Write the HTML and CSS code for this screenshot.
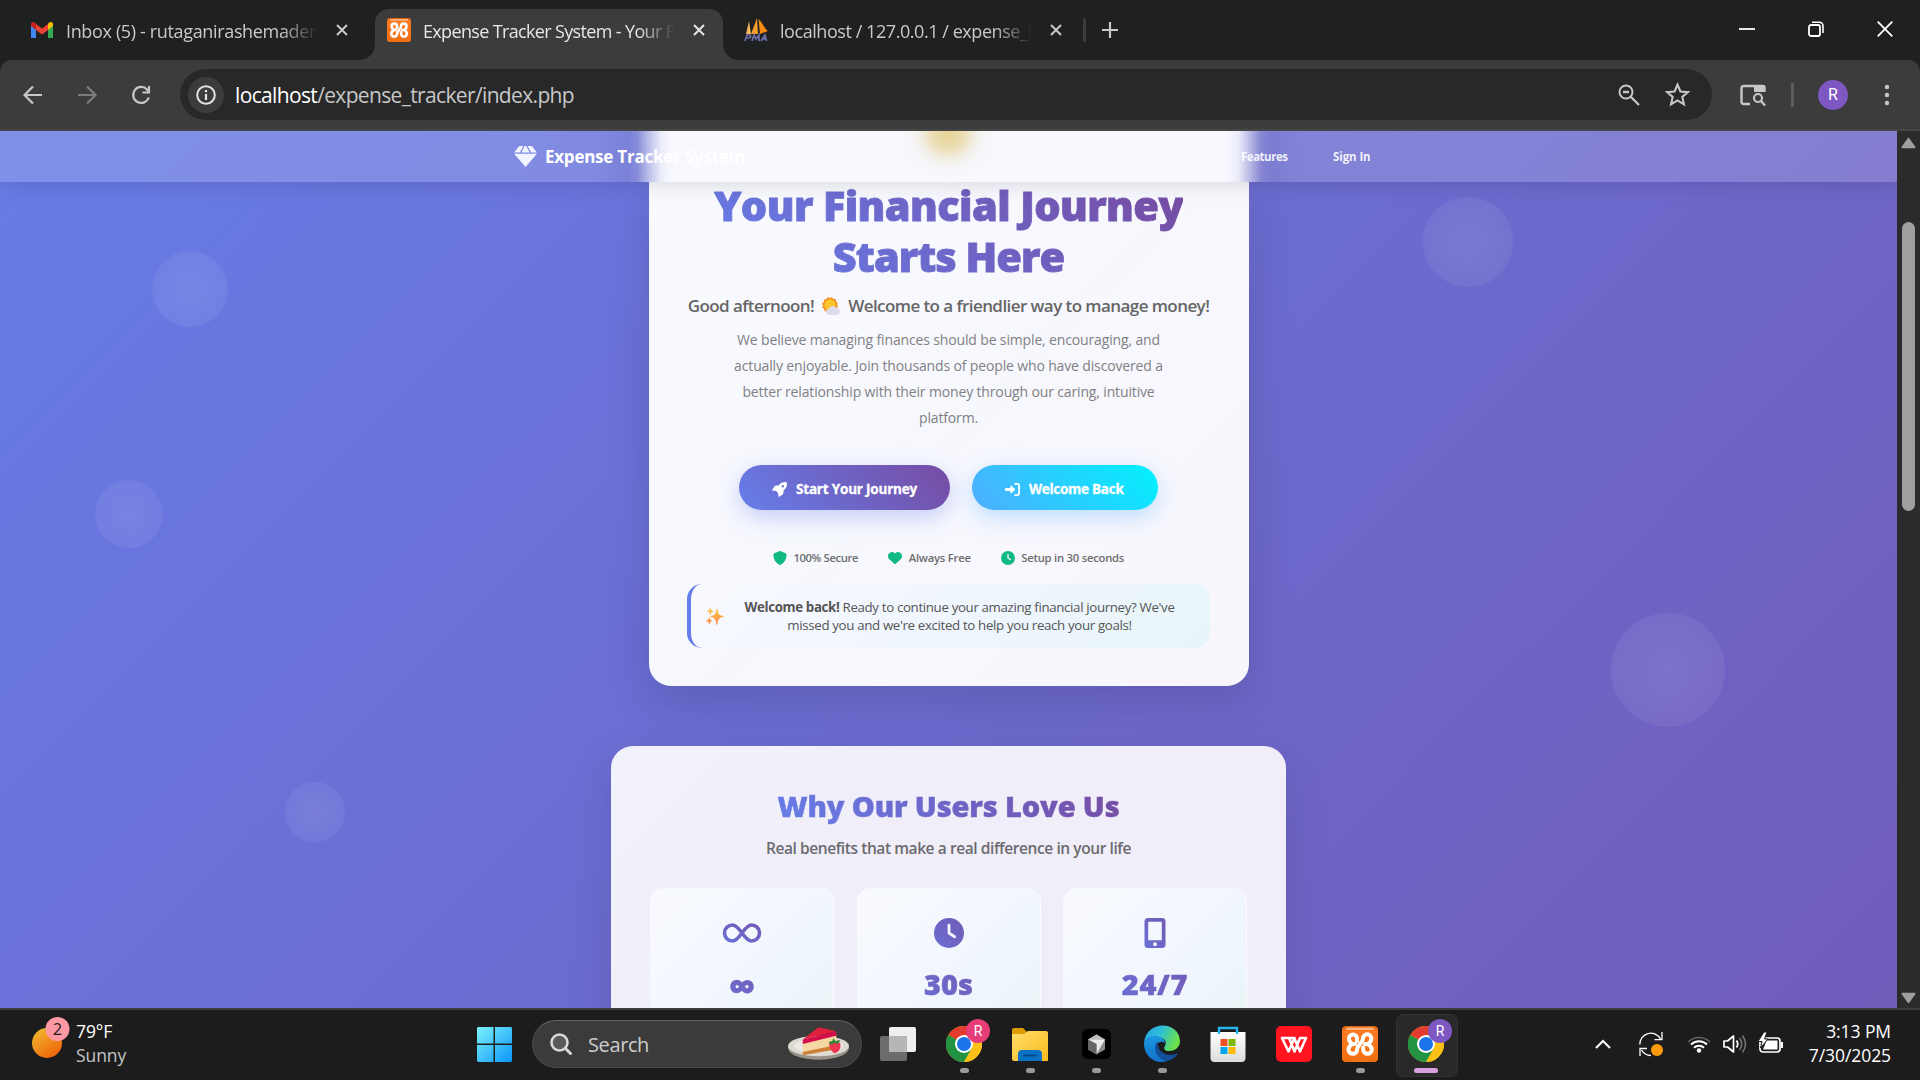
FILE: index.html
```html
<!DOCTYPE html>
<html lang="en">
<head>
<meta charset="utf-8">
<title>Expense Tracker System</title>
<link rel="stylesheet" href="styles.css">
</head>
<body>
<svg width="0" height="0" class="defs" aria-hidden="true">
  <defs>
    <linearGradient id="brand" x1="0" y1="1" x2="1" y2="0"><stop offset="0" stop-color="#6970d4"/><stop offset="1" stop-color="#735ab5"/></linearGradient>
    <linearGradient id="sunG" x1="0" y1="0" x2=".7" y2="1"><stop offset="0" stop-color="#f0c030"/><stop offset="1" stop-color="#f0640c"/></linearGradient>
    <linearGradient id="winG" x1="0" y1="0" x2="1" y2="1"><stop offset="0" stop-color="#7cf3fb"/><stop offset="1" stop-color="#0a94f8"/></linearGradient>
    <linearGradient id="orangeG" x1="0" y1="0" x2="0" y2="1"><stop offset="0" stop-color="#d8600a"/><stop offset=".15" stop-color="#fb7a24"/><stop offset="1" stop-color="#f0700f"/></linearGradient>
    <linearGradient id="folderG" x1="0" y1="0" x2="1" y2="1"><stop offset="0" stop-color="#ffdc6c"/><stop offset="1" stop-color="#fbbc1c"/></linearGradient>
    <linearGradient id="edgeA" x1="0" y1="0" x2="1" y2=".3"><stop offset="0" stop-color="#2b9fe8"/><stop offset=".5" stop-color="#2cc0d8"/><stop offset="1" stop-color="#6ae04c"/></linearGradient>
    <linearGradient id="edgeB" x1="0" y1="0" x2="0" y2="1"><stop offset="0" stop-color="#1c96e0"/><stop offset="1" stop-color="#1273cc"/></linearGradient>
    <linearGradient id="storeG" x1="0" y1="0" x2="0" y2="1"><stop offset="0" stop-color="#ffffff"/><stop offset="1" stop-color="#dcdcdc"/></linearGradient>
    <linearGradient id="spark" x1="0" y1="0" x2="0" y2="1"><stop offset="0" stop-color="#ffc44a"/><stop offset="1" stop-color="#ff8a4c"/></linearGradient>
    <symbol id="xampp" viewBox="0 0 36 36">
      <rect width="36" height="36" rx="4" fill="url(#orangeG)"/>
      <rect x="4" y="1.500" width="28" height="2.500" rx="1.200" fill="#ffb27c"/>
      <path d="M15 15V12.500a4 4 0 0 0-8 0C7 15 8 16.500 10.500 18 8 19.500 6.500 21 6.500 23.500a4.300 4.300 0 0 0 8.600 0C15.100 19.500 21 16.500 21 12.500a4 4 0 0 1 8.300 0C29.300 15 28 16.800 25.500 18 28 19.200 29.800 21 29.800 23.500a4.300 4.300 0 0 1-8.600 0V21.500M10.500 18H13M25.500 18H23" fill="none" stroke="#fff" stroke-width="4" stroke-linecap="round" stroke-linejoin="round"/>
    </symbol>
    <symbol id="chrome" viewBox="0 0 36 36">
      <circle cx="18" cy="18" r="18" fill="#fbc116"/>
      <path d="M18 18 2.400 9A18 18 0 0 1 33.600 9H18z" fill="#e33b2e"/>
      <path d="M2.400 9A18 18 0 0 0 18 36l7.800-13.500L18 18z" fill="#229342"/>
      <path d="M18 9h15.600A18 18 0 0 1 18 36l7.800-13.500z" fill="#fbc116"/>
      <circle cx="18" cy="18" r="9" fill="#fff"/><circle cx="18" cy="18" r="7" fill="#1a73e8"/>
    </symbol>
    <symbol id="clock" viewBox="0 0 512 512"><path d="M256 0a256 256 0 1 1 0 512A256 256 0 1 1 256 0zM232 120V256c0 8 4 15.500 10.700 20l96 64c11 7.400 25.900 4.400 33.300-6.700s4.400-25.900-6.700-33.300L280 243.200V120c0-13.300-10.700-24-24-24s-24 10.700-24 24z"/></symbol>
    <symbol id="x" viewBox="0 0 12 12"><path d="M1 1l10 10M11 1L1 11" fill="none" stroke="currentColor" stroke-width="2"/></symbol>
  </defs>
</svg>

<div class="screen">
  <header class="tabs">
    <div class="tab tab-first">
      <svg class="gmail" viewBox="0 0 22 16"><path d="M0 2v14h5V6z" fill="#4285f4"/><path d="M22 2v14h-5V6z" fill="#34a853"/><path d="M17 2v6l5-4V2.200C22 0 19.500-.8 17.800.8z" fill="#fbbc04"/><path d="M5 8V2l6 4.500L17 2v6l-6 4.600z" fill="#ea4335"/><path d="M0 2.200V4l5 4V2L4.200.8C2.500-.8 0 0 0 2.200z" fill="#c5221f"/></svg>
      <span class="tab-title t1">Inbox (5) - rutaganirashemadern</span>
      <svg class="x"><use href="#x"/></svg>
    </div>
    <div class="tab tab-active">
      <svg class="fav"><use href="#xampp"/></svg>
      <span class="tab-title t2">Expense Tracker System - Your F</span>
      <svg class="x"><use href="#x"/></svg>
    </div>
    <div class="tab tab-last">
      <svg class="fav" viewBox="0 0 24 24"><path d="M5 3L2 16h5z" fill="#f9b55a"/><path d="M13 0L7 16h7z" fill="#f89c2a"/><path d="M14.500 1c5 5 6 10 9.500 12l-8 3z" fill="#f58a10"/><path d="M1 23l2-6h3q2 2-1 3H2M8 23l2-6 2 4 3-4v6M17 23l4-6 1.500 6M18 21h4" fill="none" stroke="#6a6fa8" stroke-width="1.700"/></svg>
      <span class="tab-title t3">localhost / 127.0.0.1 / expense_t</span>
      <svg class="x"><use href="#x"/></svg>
    </div>
    <i class="tab-sep"></i>
    <svg class="plus" viewBox="0 0 16 16"><path d="M8 0v16M0 8h16" stroke="#c8c8c8" stroke-width="2.200"/></svg>
    <div class="win">
      <svg viewBox="0 0 16 16"><path d="M0 8h16" stroke="#fff" stroke-width="1.800"/></svg>
      <svg viewBox="0 0 16 16"><rect x="1" y="4" width="11" height="11" rx="2" fill="none" stroke="#fff" stroke-width="1.800"/><path d="M4 1.200h7.500a3.500 3.500 0 0 1 3.500 3.500V12" fill="none" stroke="#fff" stroke-width="1.600"/></svg>
      <svg viewBox="0 0 16 16"><path d="M.7.700l14.600 14.600M15.300.7L.7 15.300" stroke="#fff" stroke-width="1.800"/></svg>
    </div>
  </header>

  <div class="toolbar">
    <svg class="nav-i" viewBox="0 0 20 20"><path d="M19 10H2M10 1.500L1.500 10l8.500 8.500" fill="none" stroke="#c7c7c7" stroke-width="2.200"/></svg>
    <svg class="nav-i" viewBox="0 0 20 20"><path d="M1 10h17M10 1.500l8.500 8.500-8.500 8.500" fill="none" stroke="#7c7c7c" stroke-width="2.200"/></svg>
    <svg class="nav-i" viewBox="0 0 20 20"><path d="M17.800 12.500A8 8 0 1 1 16 4.400l1.500 2M18 1v6.500h-6.500" fill="none" stroke="#c7c7c7" stroke-width="2.200"/></svg>
    <div class="omnibox">
      <span class="info"><svg viewBox="0 0 20 20"><circle cx="10" cy="10" r="8.800" fill="none" stroke="#e3e3e3" stroke-width="2"/><path d="M10 9v6M10 5v2.200" stroke="#e3e3e3" stroke-width="2.200"/></svg></span>
      <span class="url"><b>localhost</b>/expense_tracker/index.php</span>
      <svg class="mag" viewBox="0 0 22 22"><circle cx="8" cy="8" r="6.500" fill="none" stroke="#c7c7c7" stroke-width="2"/><path d="M12.500 12.500l8.500 8.500M5 8h6" stroke="#c7c7c7" stroke-width="2.300"/></svg>
      <svg class="star" viewBox="0 0 24 24"><path d="M12 2.500l2.800 6.600 7.200.6-5.400 4.700 1.600 7L12 17.700 5.800 21.400l1.600-7L2 9.700l7.200-.6z" fill="none" stroke="#c7c7c7" stroke-width="2"/></svg>
    </div>
    <svg class="lens" viewBox="0 0 26 22"><path d="M10 20H3.500A2 2 0 0 1 1.500 18V4A2 2 0 0 1 3.500 2H22.500A2 2 0 0 1 24.500 4V8" fill="none" stroke="#c7c7c7" stroke-width="2.400"/><path d="M14 1h11v7H14z" fill="#c7c7c7"/><circle cx="18" cy="14" r="4" fill="none" stroke="#c7c7c7" stroke-width="2.200"/><path d="M21 17l4 4.500" stroke="#c7c7c7" stroke-width="2.400"/></svg>
    <i class="bar-sep"></i>
    <span class="avatar">R</span>
    <svg class="dots" viewBox="0 0 6 22"><circle cx="3" cy="3" r="2.200" fill="#c7c7c7"/><circle cx="3" cy="11" r="2.200" fill="#c7c7c7"/><circle cx="3" cy="19" r="2.200" fill="#c7c7c7"/></svg>
  </div>

  <div class="view">
    <main class="page">
      <i class="bubble b1"></i><i class="bubble b2"></i><i class="bubble b3"></i><i class="bubble b4"></i><i class="bubble b5"></i>
      <nav class="site-nav">
        <svg class="gem" viewBox="0 0 24 22"><path d="M5.500 0h4.300L6 6.800H0zM18.500 0h-4.300L18 6.800h6zM11.200 0h1.600l3.600 6.800H7.600zM0 8.200h24L12 22z"/></svg>
        <b class="brand">Expense Tracker System</b>
        <span class="links">Features</span><span class="links sign">Sign In</span>
      </nav>
      <section class="hero">
        <h1>Your Financial Journey<br><span>Starts Here</span></h1>
        <p class="greet"><span>Good afternoon!</span> <svg class="emoji" viewBox="0 0 18 18"><circle cx="8" cy="7.500" r="7" fill="#f58a1c" stroke="#f58a1c" stroke-width="1.600" stroke-dasharray="2.200 1.500"/><circle cx="8" cy="7.500" r="5.700" fill="#fcc52c"/><path d="M7.500 17.500a3.200 3.200 0 0 1-.3-6.400 3.800 3.800 0 0 1 7-.6 3.500 3.500 0 0 1 .3 7z" fill="#dcdcea"/></svg> <span>Welcome to a friendlier way to manage money!</span></p>
        <p class="lead">We believe managing finances should be simple, encouraging, and<br>actually enjoyable. Join thousands of people who have discovered a<br>better relationship with their money through our caring, intuitive<br>platform.</p>
        <div class="cta">
          <a class="btn primary"><svg viewBox="0 0 512 512"><path d="M156 320c-8-2-15-5-21-11L20 290c-14-2-20-18-11-29l80-115c12-17 31-27 52-27h84C310 5 420-8 488 8c8 2 14 8 16 16 16 68 3 178-111 263v84c0 21-10 40-27 52L251 503c-12 8-28 0-29-14l-19-115zM368 184a40 40 0 1 0 0-80 40 40 0 0 0 0 80z" fill="#fff"/></svg>Start Your Journey</a>
          <a class="btn second"><svg viewBox="0 0 512 512"><path d="M218 385l120-112c10-9 10-25 0-34L218 127c-13-12-34-3-34 15v66H32c-18 0-32 14-32 32v32c0 18 14 32 32 32h152v66c0 18 21 27 34 15z" fill="#fff"/><path d="M344 64h72a64 64 0 0 1 64 64v256a64 64 0 0 1-64 64h-72" fill="none" stroke="#fff" stroke-width="62" stroke-linecap="round"/></svg>Welcome Back</a>
        </div>
        <ul class="perks">
          <li><svg viewBox="0 0 512 512"><path d="M256 0c5 0 9 1 13 3l188 80c22 9 39 31 38 57 0 99-41 280-213 363-17 8-36 8-52 0C57 420 16 239 16 140c-1-26 16-48 38-57L243 3c4-2 8-3 13-3z"/></svg>100% Secure</li>
          <li><svg viewBox="0 0 512 512"><path d="M47 300l181 169c15 14 41 14 56 0l181-169c30-29 47-68 47-110v-6c0-70-51-130-120-141-46-8-92 7-125 40l-11 11-12-11C211 50 165 35 119 43 51 54 0 114 0 184v6c0 42 17 81 47 110z"/></svg>Always Free</li>
          <li><svg><use href="#clock"/></svg>Setup in 30 seconds</li>
        </ul>
        <div class="note">
          <svg class="sparkles" viewBox="0 0 18 18"><path d="M11 1c.8 5 2 7 7 8-5 1-6.200 3-7 8.500C10.200 12 9 10 4.500 9 9 8 10.200 6 11 1zM4 0c.3 2 1 3 3 3.500C5 4 4.300 5 4 7 3.700 5 3 4 1 3.500 3 3 3.700 2 4 0zM3 10c.3 2 1 3 3 3.500-2 .5-2.700 1.500-3 3.500-.3-2-1-3-3-3.500 2-.5 2.700-1.500 3-3.500z" fill="url(#spark)" stroke="url(#spark)" stroke-width=".8"/></svg>
          <p><b>Welcome back!</b> Ready to continue your amazing financial journey? We've<br>missed you and we're excited to help you reach your goals!</p>
        </div>
      </section>
      <section class="why">
        <h2>Why Our Users Love Us</h2>
        <p class="why-sub">Real benefits that make a real difference in your life</p>
        <div class="stats">
          <div class="stat"><svg viewBox="0 0 38 30"><path d="M19 15C14 8 12 7 9.500 7a8 8 0 0 0 0 16C12 23 14 22 19 15S26 7 28.500 7a8 8 0 0 1 0 16C26 23 24 22 19 15z" fill="none" stroke="url(#brand)" stroke-width="3.600"/></svg><strong class="inf">∞</strong></div>
          <div class="stat"><svg viewBox="0 0 30 30" fill="url(#brand)"><use href="#clock"/></svg><strong>30s</strong></div>
          <div class="stat"><svg viewBox="0 0 30 30"><path fill-rule="evenodd" d="M8 0h14a3.500 3.500 0 0 1 3.500 3.500v23A3.500 3.500 0 0 1 22 30H8a3.500 3.500 0 0 1-3.500-3.500v-23A3.500 3.500 0 0 1 8 0zM8.200 3.700v18.500h13.600V3.700zM15 24.200a2 2 0 1 0 0 4 2 2 0 0 0 0-4z" fill="url(#brand)"/></svg><strong class="always">24/7</strong></div>
        </div>
      </section>
    </main>
    <aside class="scroll">
      <svg viewBox="0 0 16 12"><path d="M8 1.500L14.500 10.500H1.500z" fill="#9f9f9f" stroke="#9f9f9f" stroke-width="2" stroke-linejoin="round"/></svg>
      <i class="thumb"></i>
      <svg viewBox="0 0 16 12"><path d="M8 10.500L14.500 1.500H1.500z" fill="#9f9f9f" stroke="#9f9f9f" stroke-width="2" stroke-linejoin="round"/></svg>
    </aside>
  </div>

  <footer class="taskbar">
    <div class="weather">
      <span class="sun"><svg viewBox="0 0 38 42"><circle cx="15" cy="26" r="15" fill="url(#sunG)"/><circle cx="25.500" cy="12" r="12" fill="#ff98a2"/></svg><em>2</em></span>
      <p>79°F<br><span class="dim">Sunny</span></p>
    </div>
    <svg class="start" viewBox="0 0 36 36"><path d="M0 1.500A1.500 1.500 0 0 1 1.500 0H17v17H0zM18.500 0H34.500A1.500 1.500 0 0 1 36 1.500V17H18.500zM0 18.500h17V36H1.500A1.500 1.500 0 0 1 0 34.500zM18.500 18.500H36V34.500A1.500 1.500 0 0 1 34.500 36H18.500z" fill="url(#winG)"/></svg>
    <div class="search">
      <svg class="s-mag" viewBox="0 0 22 22"><circle cx="9.500" cy="9.500" r="8" fill="#5a5a5a" stroke="#d8d8dc" stroke-width="2.600"/><path d="M15.500 15.500l5 5" stroke="#d8d8dc" stroke-width="3" stroke-linecap="round"/></svg>
      <span>Search</span>
      <svg class="cake" viewBox="0 0 64 36"><ellipse cx="32" cy="22" rx="31" ry="12" fill="#98948c"/><ellipse cx="32" cy="20" rx="31" ry="10.500" fill="#dedad2"/><ellipse cx="32" cy="20" rx="25" ry="7" fill="#ece9e3"/><path d="M16 17l34-9v15L16 29z" fill="#f6d9a2"/><path d="M16 26l34-7v4.500L16 29.500z" fill="#cd8138"/><path d="M16 13.500L32 1l18 4z" fill="#e0203c"/><path d="M16 13.500L50 5v4.500L16 18z" fill="#d40f4c"/><path d="M43 17q5-4 11 0 2 7-5 10.500-7-3-6-10.500z" fill="#f23350"/><path d="M42 16l4-1 1-3 2 3 5-1-2 4-4-1-3 2z" fill="#34843a"/></svg>
    </div>
    <div class="apps">
      <span class="app"><svg viewBox="0 0 36 36"><rect x="9" y="1" width="27" height="25" rx="2" fill="#efefef"/><rect y="10" width="27" height="25" rx="2" fill="#777" opacity=".88"/><path d="M9 10h18v16H9z" fill="#b6b6b6"/></svg></span>
      <span class="app run"><svg><use href="#chrome"/></svg><em class="pink">R</em></span>
      <span class="app run"><svg viewBox="0 0 36 36"><path d="M0 4a2 2 0 0 1 2-2h9l4 4-3 4H0z" fill="#dd9b04"/><path d="M0 8h12l4-3h18a2 2 0 0 1 2 2v28H2a2 2 0 0 1-2-2z" fill="url(#folderG)"/><path d="M6 35v-7a4 4 0 0 1 4-4h16a4 4 0 0 1 4 4v7z" fill="#0a72c4"/><path d="M11 29.500h14" stroke="#0a4a88" stroke-width="2"/></svg></span>
      <span class="app run"><svg viewBox="0 0 36 36"><rect x="4" y="3" width="29" height="30" rx="6" fill="#000"/><path d="M18.500 8.500l8.500 5v10l-8.500 5-8.500-5v-10z" fill="#8c8c8c"/><path d="M10 13.500l8.500-5 8.500 5z" fill="#bcbcbc"/><path d="M10 13.500h17L18.500 28V18z" fill="#ececec"/><path d="M10 13.500l8.500 4.500v10.500l-8.500-5z" fill="#666"/></svg></span>
      <span class="app run"><svg viewBox="0 0 36 36"><path d="M0 18C1-6 35-6 36 15c0 7-6 10-11 10-4 0-6-2-4-5 2-4 0-8-5-8C8 12 1 15 0 18z" fill="url(#edgeA)"/><path d="M0 18c0-5 7-9 13-8 5 1 8 4 8 7-5-4-12 2-8 9 3 6 10 8 14 7C15 41 0 32 0 18z" fill="url(#edgeB)"/><path d="M14 15c-6 5-3 16 7 20 6 0 11-4 13-8-8 4-16 1-19-4-1-3-2-6-1-8z" fill="#12509c"/></svg></span>
      <span class="app"><svg viewBox="0 0 36 36"><path d="M.5 6h35v26a4 4 0 0 1-4 4h-27a4 4 0 0 1-4-4z" fill="url(#storeG)"/><path d="M9 8V2h18v6" fill="none" stroke="#25b4ec" stroke-width="2.400"/><path d="M10.500 13h7v7h-7z" fill="#f25022"/><path d="M18.500 13h7v7h-7z" fill="#7fba00"/><path d="M10.500 21h7v7h-7z" fill="#00a4ef"/><path d="M18.500 21h7v7h-7z" fill="#ffb900"/></svg></span>
      <span class="app"><svg viewBox="0 0 36 36"><rect width="36" height="36" rx="5" fill="#ff1420"/><path d="M6 12h12.500l-6 13.500zM13 12l5.500 13.500L24 12h6l-6 13.500-5.500-13" fill="none" stroke="#fff" stroke-width="2.600" stroke-linejoin="round"/></svg></span>
      <span class="app run"><svg><use href="#xampp"/></svg></span>
      <span class="app run on"><svg><use href="#chrome"/></svg><em class="violet">R</em></span>
    </div>
    <div class="tray">
      <svg class="chev" viewBox="0 0 16 10"><path d="M1 9l7-7 7 7" fill="none" stroke="#fff" stroke-width="2"/></svg>
      <svg class="sync" viewBox="0 0 24 24"><path d="M.8 12.500A11 11 0 0 1 21.500 7M23 0v7.600h-7.500M12 23.500A11 11 0 0 1 2.500 18M1 24v-7.500h7" fill="none" stroke="#fff" stroke-width="1.300"/><circle cx="18" cy="18" r="6" fill="#ff9b0a"/></svg>
      <svg class="wifi" viewBox="0 0 24 18"><path d="M1 7a15.500 15.500 0 0 1 22 0" fill="none" stroke="#666" stroke-width="1.500"/><path d="M4 9.500a11.500 11.500 0 0 1 16 0M7 12.800a7.300 7.300 0 0 1 10 0" fill="none" stroke="#fff" stroke-width="2"/><circle cx="12" cy="15.500" r="2.200" fill="#fff"/></svg>
      <svg class="vol" viewBox="0 0 24 20"><path d="M1 7h3.500L10.500 2v16L4.500 13H1z" fill="none" stroke="#fff" stroke-width="1.700" stroke-linejoin="round"/><path d="M13.500 6.500q2.500 3.500 0 7" fill="none" stroke="#fff" stroke-width="1.700"/><path d="M16.500 4q4.500 6 0 12M19.500 1.500q6 8.500 0 17" fill="none" stroke="#777" stroke-width="1.500"/></svg>
      <svg class="bat" viewBox="0 0 24 20"><rect x="1" y="5" width="20" height="14" rx="3" fill="none" stroke="#fff" stroke-width="1.700"/><path d="M7.500 7.500H18.500V16.500H4z" fill="#fff"/><path d="M22 9h2v6h-2z" fill="#fff"/><path d="M5-1L-1 8.500h4L1.500 15 9 6H5.500L8-1z" fill="#fff" stroke="#1c1c1c"/></svg>
      <p class="time">3:13 PM<br>7/30/2025</p>
    </div>
  </footer>
</div>
</body>
</html>
```
FILE: styles.css
```css
* { box-sizing: border-box; margin: 0; padding: 0; }
body { font-family: "Open Sans", "Noto Sans", sans-serif; background: #1c1c1c; overflow: hidden; }
svg { display: block; flex: none; overflow: visible; }
i { display: block; flex: none; }
em { font-style: normal; }
.defs { position: absolute; }
.screen { width: 1920px; height: 1080px; display: flex; flex-direction: column; overflow: hidden; background: #1f2120; }

/* tab strip */
.tabs { height: 60px; flex: none; display: flex; align-items: flex-start; color: #c9c9c9; font-size: 18px; background: #1f2120; }
.tab { display: flex; align-items: center; height: 51px; margin-top: 9px; padding-bottom: 9px; position: relative; }
.tab-first { width: 375px; padding-left: 31px; }
.tab-active { width: 348px; padding-left: 12px; background: #3c3c3c; border-radius: 14px 14px 0 0; color: #e6e6e6; }
.tab-active::before, .tab-active::after { content: ""; position: absolute; bottom: 0; width: 15px; height: 15px; }
.tab-active::before { left: -15px; background: radial-gradient(circle at 0 0, #1f2120 14.5px, #3c3c3c 15px); }
.tab-active::after { right: -15px; background: radial-gradient(circle at 100% 0, #1f2120 14.5px, #3c3c3c 15px); }
.tab-last { width: 360px; padding-left: 21px; }
.gmail { width: 22px; height: 16px; margin-right: 13px; }
.fav { width: 24px; height: 24px; margin-right: 12px; }
.tab-title { width: 252px; height: 26px; line-height: 26px; margin-top: 2px; overflow: hidden; white-space: nowrap; -webkit-mask: linear-gradient(90deg, #000 214px, transparent 252px); mask: linear-gradient(90deg, #000 214px, transparent 252px); }
.t1 { letter-spacing: -.35px; }
.t2 { letter-spacing: -.65px; }
.t3 { letter-spacing: -.44px; }
.x { width: 12px; height: 12px; margin-left: 18px; }
.tab-sep { width: 3px; height: 24px; margin-top: 18px; background: #3c3c3c; border-radius: 1px; }
.plus { width: 16px; height: 16px; margin: 22px 0 0 16px; }
.win { display: flex; gap: 53px; margin: 21px 27px 0 auto; }
.win svg { width: 16px; height: 16px; }

/* address bar */
.toolbar { height: 71px; flex: none; display: flex; align-items: center; padding: 0 30px 0 23px; background: #3c3c3c; border-bottom: 2px solid #464646; border-radius: 12px 12px 0 0; }
.nav-i { width: 20px; height: 20px; margin-right: 34px; }
.nav-i + .nav-i + .nav-i { margin-right: 29px; }
.omnibox { width: 1533px; height: 51px; display: flex; align-items: center; background: #282828; border-radius: 26px; padding: 0 22px 0 8px; }
.info { width: 36px; height: 36px; border-radius: 50%; background: #3c3c3c; display: flex; align-items: center; justify-content: center; }
.info svg { width: 20px; height: 20px; }
.url { margin-left: 11px; font-size: 21px; line-height: 30px; color: #c7c7c7; flex: 1; letter-spacing: -.65px; }
.url b { font-weight: 400; color: #fff; }
.mag { width: 22px; height: 22px; margin-right: 25px; }
.star { width: 25px; height: 25px; }
.lens { width: 26px; height: 22px; margin-left: 28px; }
.bar-sep { width: 3px; height: 24px; background: #5c5c5c; margin: 0 24px 0 25px; }
.avatar { width: 30px; height: 30px; border-radius: 50%; background: #7e57c2; color: #fff; text-align: center; font: 16px/30px Roboto, sans-serif; }
.dots { width: 6px; height: 22px; margin-left: 36px; }

/* web page */
.view { height: 877px; flex: none; display: flex; }
.page { width: 1897px; height: 877px; position: relative; overflow: hidden; background: linear-gradient(135deg, #667eea, #764ba2) 0 -212px / 1897px 2560px no-repeat; }
.bubble { position: absolute; border-radius: 50%; background: radial-gradient(circle, rgba(255,255,255,.1), rgba(255,255,255,.045)); }
.b1 { left: 152px; top: 120px; width: 76px; height: 76px; }
.b2 { left: 95px; top: 349px; width: 68px; height: 68px; }
.b3 { left: 285px; top: 651px; width: 60px; height: 60px; }
.b4 { left: 1423px; top: 66px; width: 90px; height: 90px; }
.b5 { left: 1611px; top: 482px; width: 114px; height: 114px; }

.site-nav {
  position: relative; z-index: 2; height: 51px; padding-left: 514px; display: flex; align-items: center; color: #fff;
  box-shadow: 0 3px 20px rgba(0,0,0,.12);
  background:
    radial-gradient(ellipse 52px 48px at 948px 3px, rgba(229,208,138,.9), rgba(232,213,155,.75) 30%, rgba(236,226,200,.4) 55%, rgba(240,238,235,.25) 75%, rgba(248,249,254,0)),
    linear-gradient(90deg, rgba(248,249,254,0) 628px, rgba(248,249,254,.1) 637px, rgba(248,249,254,.5) 648px, rgba(248,249,254,.9) 661px, #f8f9fe 672px, #f8f9fe 1226px, rgba(248,249,254,.9) 1238px, rgba(248,249,254,.5) 1250px, rgba(248,249,254,.1) 1261px, rgba(248,249,254,0) 1270px),
    linear-gradient(90deg, rgba(90,80,170,0) 590px, rgba(90,80,170,.2) 640px, rgba(90,80,170,.2) 1258px, rgba(90,80,170,0) 1305px),
    rgba(255,255,255,.16);
}
.gem { width: 23px; height: 21px; fill: #f2f5ff; }
.brand { font-size: 17px; font-weight: 700; width: 696px; margin-left: 8px; letter-spacing: -.24px; }
.links { font-size: 11.5px; font-weight: 700; color: rgba(255,255,255,.9); width: 92px; white-space: nowrap; letter-spacing: -.48px; }
.sign { letter-spacing: -.1px; }

.hero { position: relative; width: 600px; height: 504px; margin: 0 auto; padding: 0 38px; display: flex; flex-direction: column; align-items: center; text-align: center; background: linear-gradient(135deg, #f9fafe, #f7f8fe 50%, #f8f6fc); border-radius: 0 0 22px 22px; box-shadow: 0 15px 45px rgba(0,0,0,.13); }
h1 { font-size: 41.5px; font-weight: 800; line-height: 50.6px; white-space: nowrap; margin-top: -2px; letter-spacing: -.6px; -webkit-text-stroke: .9px transparent; }
h1 span { letter-spacing: -1px; }
h1, h2 { background: linear-gradient(45deg, #667eea, #764ba2); -webkit-background-clip: text; background-clip: text; color: transparent; }
.greet { display: flex; align-items: center; gap: 8px; font-size: 17px; font-weight: 600; line-height: 26px; color: #666; margin-top: 12px; letter-spacing: -.57px; white-space: nowrap; }
.emoji { width: 18px; height: 19px; }
.lead { font-size: 14px; line-height: 26px; color: #808083; white-space: nowrap; margin-top: 8px; letter-spacing: -.145px; }
.cta { display: flex; gap: 22px; margin-top: 34px; }
.btn { height: 45px; border-radius: 23px; display: flex; align-items: center; gap: 9px; padding: 3px 0 0 33px; color: #fff; font-size: 13.5px; font-weight: 700; letter-spacing: -.2px; white-space: nowrap; -webkit-text-stroke: .3px #fff; }
.btn svg { width: 15px; height: 15px; }
.primary { width: 211px; background: linear-gradient(45deg, #667eea, #764ba2); box-shadow: 0 7px 22px rgba(102,126,234,.35); }
.second { width: 186px; letter-spacing: -.27px; background: linear-gradient(45deg, #4facfe, #00f2fe); box-shadow: 0 7px 22px rgba(79,172,254,.35); }
.perks { display: flex; list-style: none; margin-top: 39px; gap: 30px; font-size: 11.3px; font-weight: 600; line-height: 18px; color: #6e6e6e; letter-spacing: -.25px; }
.perks li { display: flex; align-items: center; gap: 6.5px; }
.perks li:first-child { letter-spacing: -.38px; }
.perks svg { width: 14px; height: 14px; fill: #10b981; }
.note { width: 523px; height: 64px; margin-top: 17px; display: flex; align-items: center; border-left: 4px solid #667eea; border-radius: 15px; background: linear-gradient(135deg, #f8f9ff, #f0f6fe 50%, #e7f5f8); color: #555; }
.sparkles { width: 18px; height: 17px; margin: 0 20px 0 15px; }
.note p { width: 431px; font-size: 13.3px; line-height: 17.3px; white-space: nowrap; letter-spacing: -.35px; padding-top: 1px; }
.note b { font-weight: 700; }

.why { position: relative; width: 675px; height: 500px; margin: 60px auto 0; padding: 40px 39px 0; text-align: center; border-radius: 22px; background: linear-gradient(135deg, #f1f2fc, #f0eef9 30%, #f1eef9); box-shadow: 0 15px 45px rgba(0,0,0,.1); }
h2 { width: 346px; margin: 0 auto; font-size: 29px; font-weight: 800; line-height: 40px; white-space: nowrap; letter-spacing: -.14px; -webkit-text-stroke: .5px transparent; }
.why-sub { font-size: 15.5px; font-weight: 600; line-height: 24px; color: #6b6b6e; margin-top: 10px; letter-spacing: -.42px; }
.stats { display: grid; grid-template-columns: repeat(3, 184px); gap: 22.5px; margin-top: 28px; }
.stat { height: 300px; padding-top: 29px; border: 1px solid rgba(255,255,255,.5); border-radius: 14px; background: linear-gradient(135deg, #f9faff, #f0f6fe 45%, #ebf5f8 60%, #e8f2fd); }
.stat svg { width: auto; height: 30px; margin: 0 auto; }
.stat strong { display: block; font-size: 29px; font-weight: 800; line-height: 40px; margin-top: 16px; background: linear-gradient(45deg, #6a6fd4, #735ab5) center / 67px 100% no-repeat; -webkit-background-clip: text; background-clip: text; color: transparent; -webkit-text-stroke: .5px transparent; }
.stat .inf { font-size: 38px; padding-top: 1px; }
.stat .always { letter-spacing: .7px; }

.scroll { width: 23px; background: #2b2b2b; display: flex; flex-direction: column; align-items: center; padding: 6px 0 4px; }
.scroll svg { width: 15px; height: 12px; }
.thumb { width: 13px; height: 289px; border-radius: 7px; background: #9f9f9f; margin: 73px 0 auto; }

/* taskbar */
.taskbar { height: 72px; flex: none; display: flex; align-items: flex-start; border-top: 2px solid #3c3c3f; background: #1c1c1c; color: #fff; font-size: 17.5px; letter-spacing: -.08px; }
.weather { width: 476px; display: flex; padding: 7px 0 0 32px; }
.weather p { line-height: 24px; margin: 2px 0 0 6px; }
.dim { color: #c4c4c4; }
.sun { position: relative; width: 38px; height: 42px; }
.sun svg { width: 38px; height: 42px; }
.sun em { position: absolute; left: 14px; top: 0; width: 23px; text-align: center; line-height: 24px; font-size: 16.500px; color: #1c1c1c; }
.start { width: 35px; height: 35px; margin: 17px 20px 0 1px; }
.search { width: 330px; height: 48px; margin-top: 10px; display: flex; align-items: center; border-radius: 24px; background: #3b3b3b; border: 1.500px solid #4b4b4b; border-top-color: #636363; padding: 0 11px 0 17px; font-size: 20px; letter-spacing: -.39px; color: #cdcdcd; }
.s-mag { width: 22px; height: 22px; margin-right: 16px; }
.cake { width: 63px; height: 36px; margin-left: auto; }
.apps { display: flex; margin-left: 3px; }
.app { position: relative; width: 66px; height: 70px; padding: 16px 15px 0; }
.app > svg { width: 36px; height: 36px; position: relative; }
.run::after { content: ""; position: absolute; left: 29px; bottom: 7px; width: 9px; height: 5px; border-radius: 3px; background: #9a9a9a; }
.on::before { content: ""; position: absolute; left: 3px; top: 4px; width: 60px; height: 61px; border-radius: 7px; background: #292929; border: 1px solid #333; }
.on::after { left: 21px; width: 24px; background: #d9a0e0; }
.app em { position: absolute; left: 35px; top: 9px; width: 24px; height: 24px; border-radius: 50%; text-align: center; font: 14px/24px Roboto, sans-serif; color: #fff; }
.pink { background: #e63c78; }
.violet { background: #7e57c2; }
.tray { margin-left: auto; display: flex; align-items: flex-start; }
.chev { width: 16px; height: 10px; margin: 29px 28px 0 0; }
.sync { width: 24px; height: 24px; margin: 22px 24px 0 0; }
.wifi { width: 24px; height: 18px; margin: 25px 12px 0 0; }
.vol { width: 24px; height: 20px; margin: 24px 12px 0 0; }
.bat { width: 24px; height: 20px; margin-top: 23px; }
.time { width: 108px; margin: 9px 29px 0 0; text-align: right; line-height: 24px; }
```
